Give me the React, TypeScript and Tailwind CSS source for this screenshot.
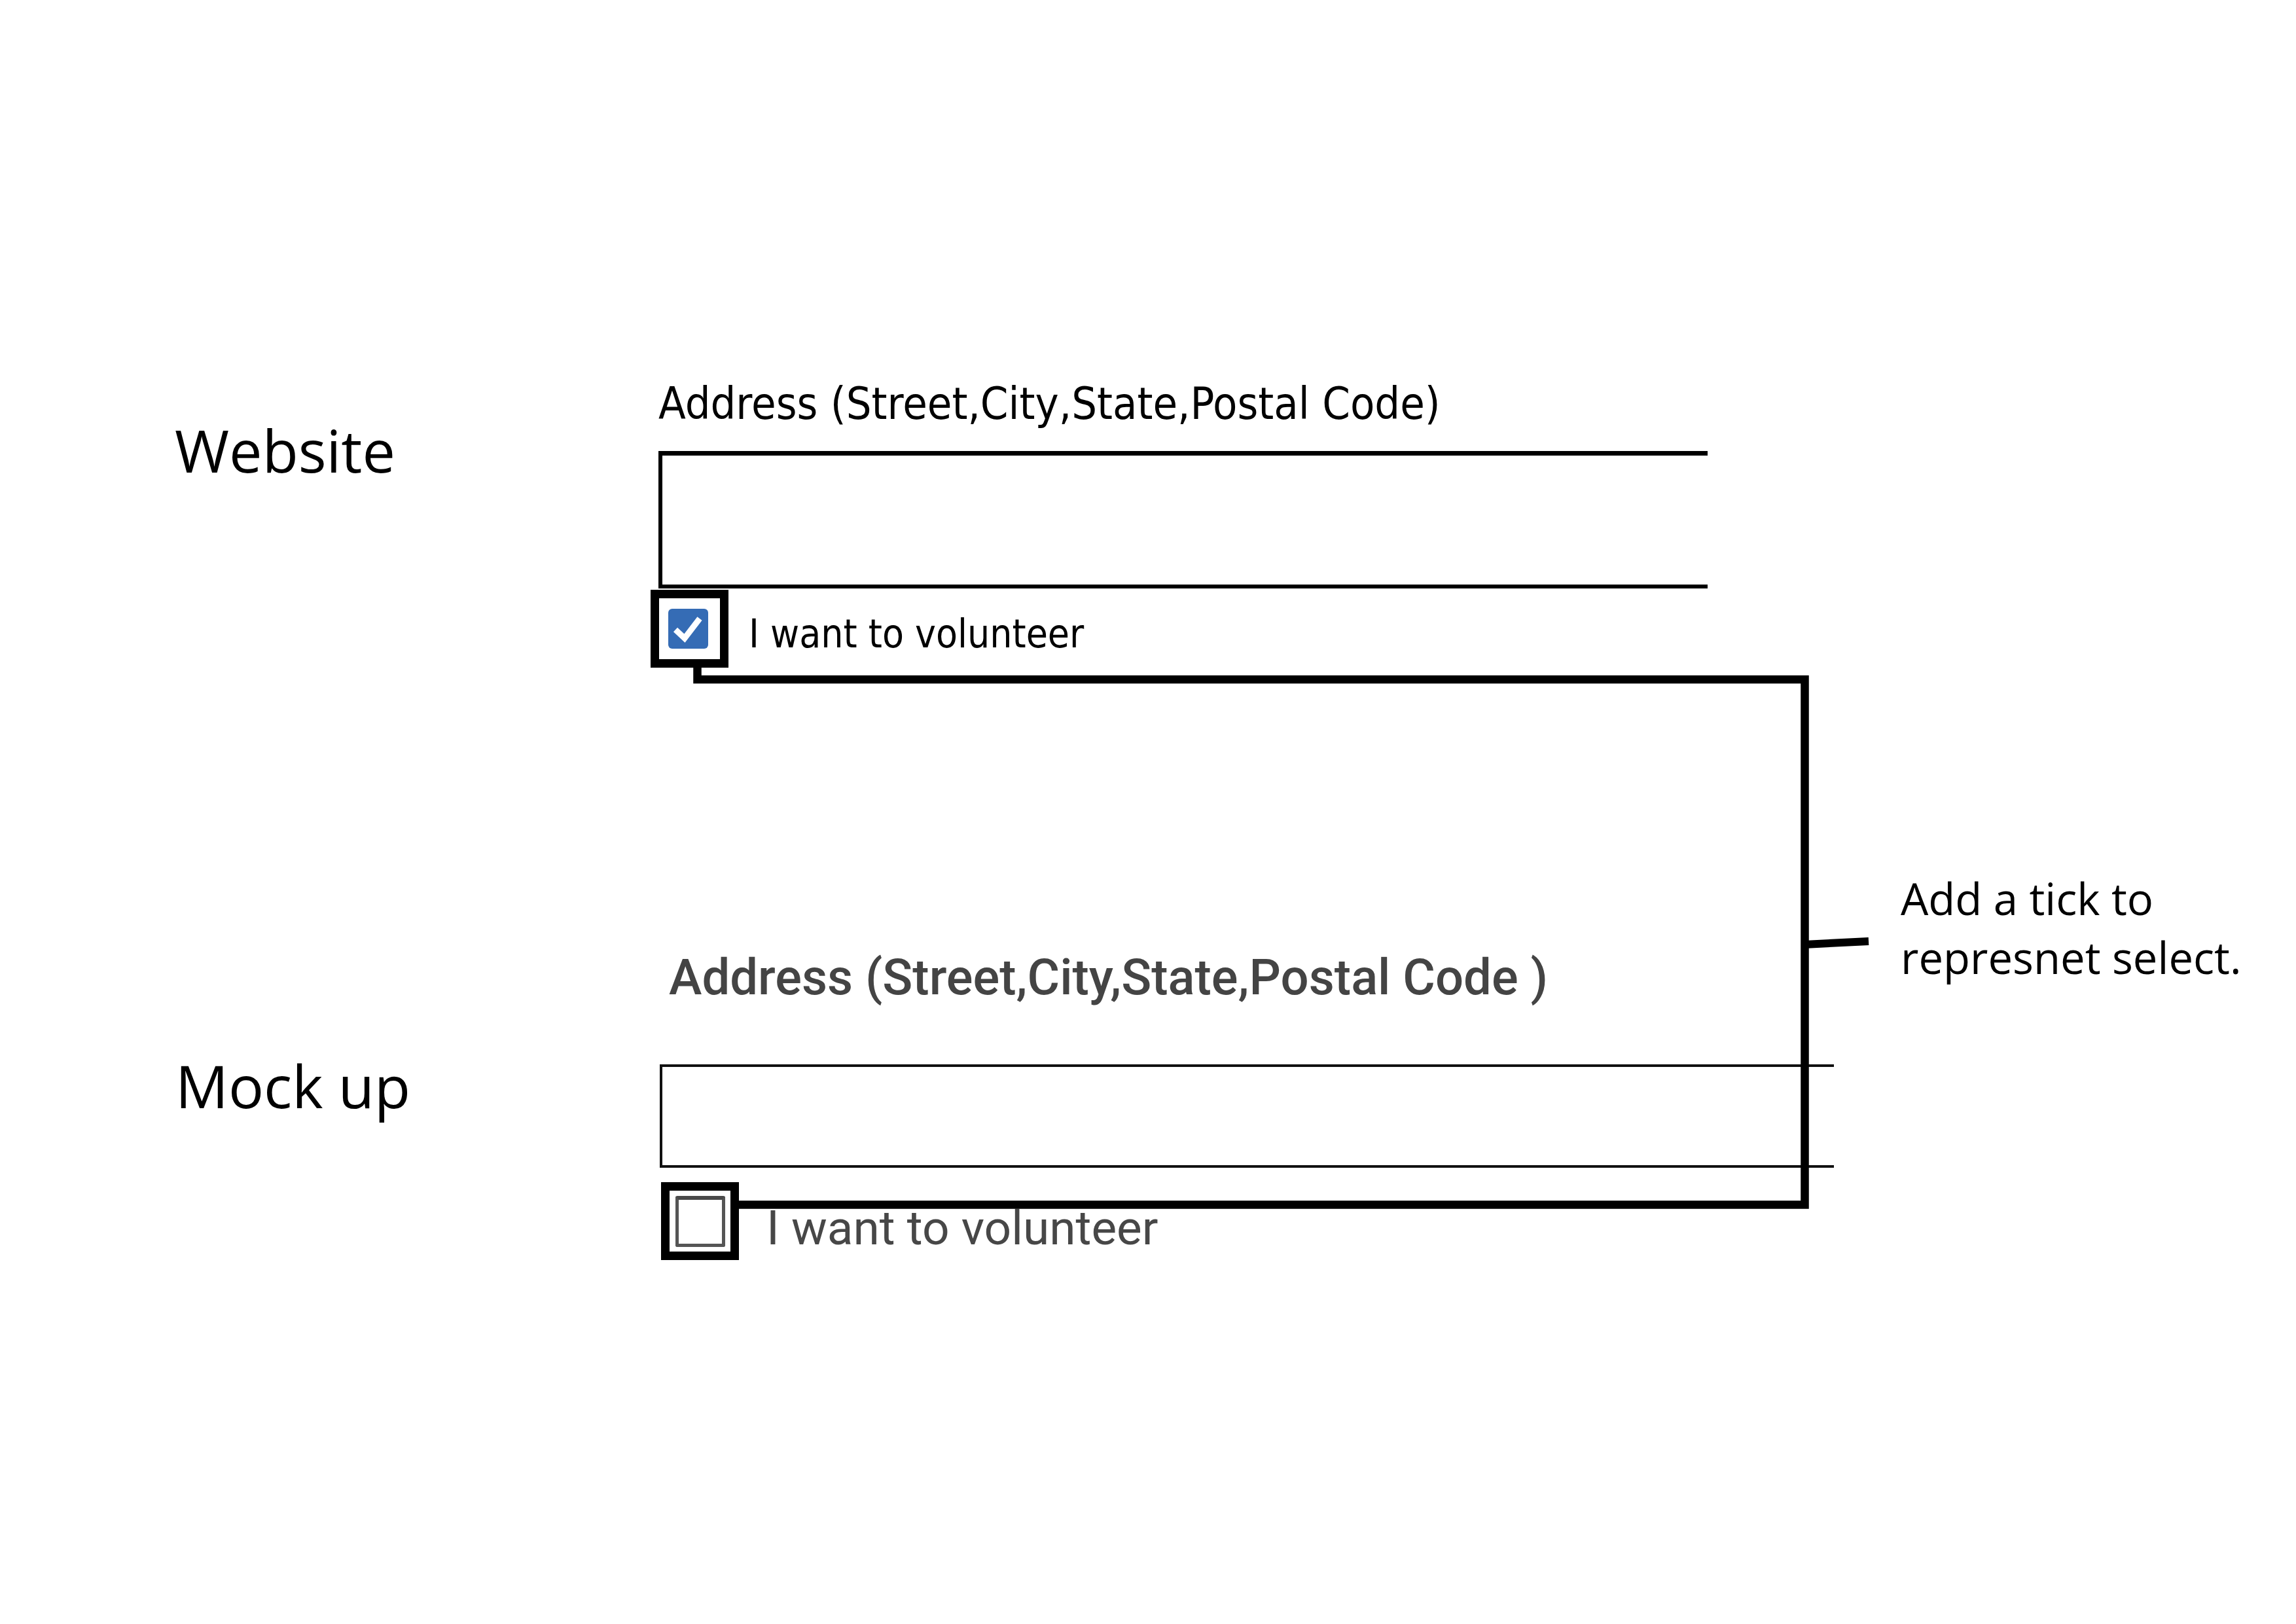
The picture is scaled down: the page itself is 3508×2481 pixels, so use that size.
import React from "react";

function BlueCheck() {
  return (
    <div className="w-[61px] h-[61px] rounded-[6px] bg-[#356cb5] flex items-center justify-center">
      <svg width="61" height="61" viewBox="0 0 61 61">
        <polyline points="11,32 25,45 48,15" fill="none" stroke="#ffffff" strokeWidth="9" strokeLinejoin="miter" />
      </svg>
    </div>
  );
}

export default function App() {
  return (
    <div className="relative w-[3508px] h-[2481px] bg-white overflow-hidden flex">
      {/* main content */}
      <div className="flex flex-col w-[2904px] shrink-0">
        {/* Website section */}
        <div className="flex pt-[583px]">
          <div className="w-[1006px] shrink-0 pl-[267px] pt-[59px]">
            <div className="font-['Open_Sans',sans-serif] text-[90px] leading-[90px] text-black">Website</div>
          </div>
          <div className="flex flex-col">
            <div className="font-['DejaVu_Sans_Condensed','DejaVu_Sans',sans-serif] font-stretch-condensed text-[68px] leading-[68px] h-[68px] text-black whitespace-nowrap">
              Address (Street,City,State,Postal Code)
            </div>
            <div className="mt-[38px] w-[1603px] h-[210px] border-t-[7px] border-b-[6px] border-l-[6px] border-black bg-white" />
            <div className="mt-[2px] -ml-[12px] flex items-start">
              <div className="w-[119px] h-[119px] border-[13px] border-black bg-white flex items-center justify-center pr-[4px] shrink-0">
                <BlueCheck />
              </div>
              <div className="ml-[31px] mt-[37px] font-['DejaVu_Sans_Condensed','DejaVu_Sans',sans-serif] font-stretch-condensed text-[60px] leading-[60px] text-black whitespace-nowrap">
                I want to volunteer
              </div>
            </div>
          </div>
        </div>

        {/* Mock up section */}
        <div className="flex mt-[435px]">
          <div className="w-[1006px] shrink-0 pl-[268px] pt-[158px]">
            <div className="font-['Open_Sans',sans-serif] text-[90px] leading-[90px] text-black">Mock up</div>
          </div>
          <div className="flex flex-col">
            <div className="ml-[16px] font-['Roboto',sans-serif] font-medium text-[76px] leading-[76px] h-[77px] text-[#444444] whitespace-nowrap">
              Address (Street,City,State,Postal Code )
            </div>
            <div className="mt-[94px] ml-[2px] w-[1794px] h-[158px] border-t-[4px] border-b-[4px] border-l-[4px] border-[#111111] bg-white" />
            <div className="mt-[22px] ml-[4px] flex items-start">
              <div className="w-[119px] h-[119px] border-[13px] border-black bg-white flex items-center justify-center shrink-0">
                <div className="w-[76px] h-[78px] rounded-[3px] border-[5px] border-[#555555] border-t-[6px] border-t-[#4a4a4a] bg-white" />
              </div>
              <div className="ml-[42px] mt-[34px] font-['Roboto',sans-serif] text-[73px] leading-[73px] text-[#474747] whitespace-nowrap">
                I want to volunteer
              </div>
            </div>
          </div>
        </div>
      </div>

      {/* annotation */}
      <div className="pt-[1327px]">
        <div className="font-['Open_Sans',sans-serif] text-[67px] leading-[90px] text-black whitespace-nowrap">
          <div>Add a tick to</div>
          <div>represnet select.</div>
        </div>
      </div>

      {/* connector lines drawn over the content */}
      <svg
        className="absolute left-0 top-0 pointer-events-none"
        width="3508"
        height="2481"
        viewBox="0 0 3508 2481"
      >
        <path
          d="M1065.5 1018 V1038 H2757.5 V1840.5 H1126"
          fill="none"
          stroke="#000000"
          strokeWidth="12.5"
          strokeLinejoin="miter"
        />
        <line x1="2757" y1="1443" x2="2855" y2="1438" stroke="#000000" strokeWidth="12" />
      </svg>
    </div>
  );
}
